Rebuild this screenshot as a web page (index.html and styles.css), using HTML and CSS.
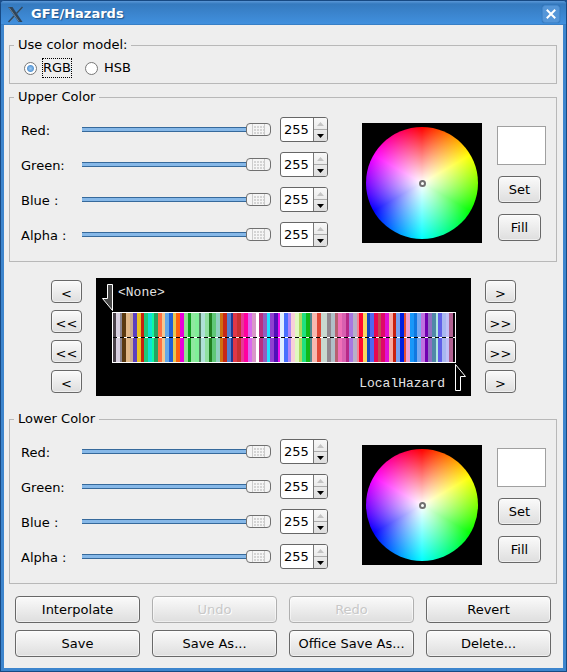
FILE: index.html
```html
<!DOCTYPE html>
<html lang="en">
<head>
<meta charset="utf-8">
<title>GFE/Hazards</title>
<link rel="stylesheet" href="styles.css">
</head>
<body>
<div class="window">
  <header class="titlebar">
    <svg class="app-icon" width="17" height="17" viewBox="0 0 17 17" aria-hidden="true">
      <path d="M14.5 1 L16 1.5 L3 16 L1.5 15.5 Z" fill="#6d93ba"/>
      <path d="M1 1 H5.5 L15.5 16 H11.5 Z" fill="#304458"/>
      <path d="M2 1.5 L12 15.5" fill="none" stroke="#6f8497" stroke-width="1"/>
      <path d="M15.5 1 L9.5 7.5 M7 10 L1.5 16" fill="none" stroke="#2f4860" stroke-width="1.5"/>
    </svg>
    <h1 class="title">GFE/Hazards</h1>
    <button class="close" type="button" aria-label="Close">
      <svg width="10" height="10" viewBox="0 0 10 10"><path d="M1.5 1.5 L8.5 8.5 M8.5 1.5 L1.5 8.5" stroke="#fff" stroke-width="2" stroke-linecap="square"/></svg>
    </button>
  </header>

  <main class="content">
    <fieldset class="group">
      <legend>Use color model:</legend>
      <div class="models">
        <label class="model"><input type="radio" name="model" checked><span class="model-name focused">RGB</span></label>
        <label class="model"><input type="radio" name="model"><span class="model-name">HSB</span></label>
      </div>
    </fieldset>

    <fieldset class="group color-group" data-prefix="upper">
      <legend>Upper Color</legend>
      <div class="color-editor">
        <div class="channels"></div>
        <div class="wheel-box"><div class="wheel"></div><span class="marker"></span></div>
        <div class="side">
          <div class="swatch"></div>
          <button class="btn small" type="button">Set</button>
          <button class="btn small" type="button">Fill</button>
        </div>
      </div>
    </fieldset>

    <section class="range-editor">
      <div class="steps">
        <button class="btn step" type="button">&lt;</button>
        <button class="btn step" type="button">&lt;&lt;</button>
        <button class="btn step" type="button">&lt;&lt;</button>
        <button class="btn step" type="button">&lt;</button>
      </div>
      <svg class="colorbar" viewBox="0 0 375 118" role="img" aria-label="Color table">
        <rect width="375" height="118" fill="#000"/>
        <g id="stripes" shape-rendering="crispEdges"></g>
        <rect x="16.5" y="34.5" width="343" height="50" fill="none" stroke="#fff"/>
        <path d="M17 59.5 H359" stroke="#fff"/>
        <path d="M17 59.5 H359" stroke="#000" stroke-dasharray="4 3"/>
        <path d="M11.5 6.5 H16.5 V32.5 L6.5 20.5 H11.5 Z" fill="#484848" stroke="#fff"/>
        <path d="M359.5 86.5 L369.5 98.5 H364.5 V112.5 H359.5 Z" fill="#000" stroke="#fff"/>
        <text class="mark" x="22" y="18">&lt;None&gt;</text>
        <text class="mark" x="349" y="109" text-anchor="end">LocalHazard</text>
      </svg>
      <div class="steps">
        <button class="btn step" type="button">&gt;</button>
        <button class="btn step" type="button">&gt;&gt;</button>
        <button class="btn step" type="button">&gt;&gt;</button>
        <button class="btn step" type="button">&gt;</button>
      </div>
    </section>

    <fieldset class="group color-group" data-prefix="lower">
      <legend>Lower Color</legend>
      <div class="color-editor">
        <div class="channels"></div>
        <div class="wheel-box"><div class="wheel"></div><span class="marker"></span></div>
        <div class="side">
          <div class="swatch"></div>
          <button class="btn small" type="button">Set</button>
          <button class="btn small" type="button">Fill</button>
        </div>
      </div>
    </fieldset>

    <div class="actions">
      <button class="btn" type="button">Interpolate</button>
      <button class="btn" type="button" disabled>Undo</button>
      <button class="btn" type="button" disabled>Redo</button>
      <button class="btn" type="button">Revert</button>
      <button class="btn" type="button">Save</button>
      <button class="btn" type="button">Save As...</button>
      <button class="btn" type="button">Office Save As...</button>
      <button class="btn" type="button">Delete...</button>
    </div>
  </main>
</div>
<script src="script.js"></script>
</body>
</html>
```
FILE: styles.css
```css
* { box-sizing: border-box; }

body {
  margin: 0;
  background: #1c4f8c;
  color: #000;
  font: 13px/16px "DejaVu Sans", sans-serif;
}

button, input { font: inherit; color: inherit; margin: 0; }

.window {
  display: flex;
  flex-direction: column;
  min-height: 100vh;
  border: 1px solid #174983;
  border-radius: 4px 4px 0 0;
  background: #3d85cd;
  padding: 0 3px 3px;
}

.titlebar {
  display: flex;
  align-items: center;
  height: 24px;
  margin: 0 -3px;
  padding: 2px 6px 0 6px;
  background: linear-gradient(#5b98d8 0, #357abf 3px, #4190de 23px, #2d6eaf 24px);
  border-radius: 3px 3px 0 0;
}

.title {
  flex: 1;
  margin: 0 0 0 7px;
  color: #fff;
  font-size: 13px;
  line-height: 16px;
  text-shadow: 1px 1px 1px #235489;
}

.close {
  display: grid;
  place-items: center;
  width: 18px;
  height: 18px;
  padding: 0;
  border: 1px solid #4488cd;
  border-radius: 3px;
  background: #5596d8;
  box-shadow: 0 0 1px #1f5b9a;
}

.content {
  flex: 1;
  padding: 12px 6px 0 5px;
  background: #eee;
}

.group {
  min-width: 0;
  margin: 0;
  padding: 0 10px 0 11px;
  border: 1px solid #b8b8b8;
}

.group legend {
  margin-left: -7px;
  padding: 0 4px;
}

.models {
  display: flex;
  gap: 13px;
  height: 30px;
  padding: 4px 0 0 3px;
}

.model { display: flex; align-items: center; gap: 5px; height: 22px; }

.model input {
  appearance: none;
  width: 13px;
  height: 13px;
  border: 1px solid #777;
  border-radius: 50%;
  background: #fff;
}

.model input:checked { background: radial-gradient(circle, #9cc9f2 0, #5c9ad6 3px, #fff 4px); }

.model-name { padding: 1px 0; border: 1px dotted transparent; }
.focused { border-color: #000; }

.color-group { margin-top: 5px; }

.color-editor {
  display: flex;
  align-items: flex-start;
  height: 156px;
  padding-top: 18px;
}

.channels { flex: 1; margin-top: -11px; min-width: 0; }

.channel { display: flex; align-items: center; height: 35px; }

.channel label { width: 61px; padding-top: 2px; }

.channel input[type="range"] {
  appearance: none;
  flex: 1;
  min-width: 0;
  height: 15px;
  margin-right: 9px;
  background: transparent;
}

.channel input[type="range"]::-webkit-slider-runnable-track {
  height: 5px;
  background: linear-gradient(#36699b 1px, #86b8e8 1px, #86b8e8 4px, #36699b 4px);
}

.channel input[type="range"]::-webkit-slider-thumb {
  appearance: none;
  width: 25px;
  height: 13px;
  margin-top: -4px;
  border: 1px solid #707070;
  border-radius: 4px;
  background:
    radial-gradient(circle at 1px 1px, #d4d4d4 1px, transparent 1px) 7px 1px / 3px 3px content-box,
    linear-gradient(90deg, #f4f4f4 5px, #ccc 5px, #ccc 6px, #f5f5f5 6px, #f5f5f5 17px, #ccc 17px, #ccc 18px, #f4f4f4 18px);
  background-repeat: repeat, no-repeat;
  padding: 1px 6px;
}

.spin {
  display: flex;
  width: 48px;
  height: 25px;
  border: 1px solid #666;
  border-radius: 3px;
  background: #fff;
  overflow: hidden;
}

.spin input {
  appearance: textfield;
  flex: 1;
  min-width: 0;
  padding: 0 0 0 3px;
  border: 0;
  background: transparent;
}

.spin input::-webkit-inner-spin-button { appearance: none; margin: 0; }

.spin-buttons {
  display: flex;
  flex-direction: column;
  width: 14px;
  border-left: 1px solid #777;
  background: linear-gradient(#f8f8f8, #ddd);
}

.spin-buttons button {
  display: grid;
  flex: 1;
  place-items: center;
  padding: 0;
  border: 0;
  background: transparent;
}

.spin-buttons button + button { border-top: 1px solid #aaa; }

.wheel-box {
  position: relative;
  width: 120px;
  height: 120px;
  margin: 0 15px 0 34px;
  padding: 4px;
  background: #000;
}

.wheel {
  height: 112px;
  border-radius: 50%;
  background:
    radial-gradient(closest-side, #fff, rgba(255, 255, 255, 0)),
    conic-gradient(#f00, #ff0, #0f0, #0ff, #00f, #f0f, #f00);
}

.marker {
  position: absolute;
  inset: 0;
  width: 7px;
  height: 7px;
  margin: auto;
  border: 2px solid #707070;
  border-radius: 50%;
}

.side { display: flex; flex-direction: column; width: 49px; padding-top: 3px; }

.swatch { height: 39px; margin-bottom: 11px; border: 1px solid #a0a0a0; background: #fff; }

.btn {
  height: 27px;
  padding: 0;
  border: 1px solid #686868;
  border-radius: 4px;
  background: linear-gradient(#fafafa, #ececec 50%, #dedede);
  box-shadow: inset 0 0 0 1px rgba(255, 255, 255, 0.5);
  line-height: 16px;
}

.btn:disabled {
  border-color: #b0b0b0;
  color: #c8c8c8;
  text-shadow: 1px 1px #fff;
}

.small { width: 43px; margin: 0 0 11px 1px; }

.range-editor {
  display: flex;
  align-items: flex-start;
  gap: 14px;
  margin: 16px 41px 0 42px;
}

.steps { display: flex; flex-direction: column; gap: 7px; padding-top: 2px; }

.step { width: 31px; height: 23px; padding-top: 4px; }

.colorbar { display: block; flex: 1; min-width: 0; }

.mark { fill: #e4e4e4; font: 13px "Liberation Mono", monospace; }

.range-editor + .color-group { margin-top: 15px; }

.actions {
  display: grid;
  grid-template-columns: repeat(4, 1fr);
  gap: 7px 12px;
  padding: 12px 6px 11px;
}
```
FILE: script.js
```js
// Channel rows shared by the upper and lower editors.
const channels = ["Red:", "Green:", "Blue :", "Alpha :"];

document.querySelectorAll(".color-group").forEach((group) => {
  const prefix = group.dataset.prefix;
  group.querySelector(".channels").innerHTML = channels.map((name, i) => {
    const id = prefix + "-" + i;
    return `<div class="channel">
      <label for="${id}">${name}</label>
      <input id="${id}" type="range" min="0" max="255" value="255">
      <div class="spin">
        <input type="number" min="0" max="255" value="255" aria-label="${name} value">
        <div class="spin-buttons">
          <button type="button" disabled aria-label="Increase"><svg width="7" height="4" viewBox="0 0 7 4"><path d="M0 4 L3.5 0 L7 4Z" fill="#c4c4c4"/></svg></button>
          <button type="button" aria-label="Decrease"><svg width="7" height="4" viewBox="0 0 7 4"><path d="M0 0 L3.5 4 L7 0Z" fill="#000"/></svg></button>
        </div>
      </div>
    </div>`;
  }).join("");
});

// Color table entries: color and width of each stripe.
const table = `484048 3,d8d0e0 4,888490 2,5a3a10 4,e0b888 4,c8a890 3,5a3fc0 4,e8c020 4,c82010 3,20c878 4,
10e0d8 4,10f8a0 2,28a060 4,ff7040 4,f0c890 3,60a8e8 4,2060d8 4,e8c850 3,ff6010 4,e800d8 4,90e090 4,10a020 3,
90e8a0 4,80f098 4,508060 2,b0e0d8 4,90e0a0 4,208020 3,60c878 4,90d0c0 4,d07010 3,c82818 4,5080d0 4,203890 2,
e03848 4,c83030 4,e83898 3,ff00a0 4,d868f0 4,d898c8 4,ffffff 3,b83080 4,9060c0 4,20e0ff 3,9040d0 4,5010b8 4,
f010f0 2,e0f0ff 4,4870ff 4,b088f8 3,f8d0d8 4,e0f8c0 4,b0d860 3,20e080 4,10b818 4,508890 2,f8b8b0 5,e04838 4,
c8d8d0 6,908890 4,b0c0c8 4,b86070 3,f070b8 4,d860b0 4,b82888 3,a878e0 4,b8b0c8 4,f08898 2,ff0830 4,f8d860 4,
1048c0 3,5068f0 4,e80850 4,c05050 3,e00868 4,e010d8 4,f8a8a0 4,c82010 3,78a0f0 4,0020e0 4,e85030 2,f0a0d0 4,
1898f8 4,1078e0 3,78a8f0 4,c070e0 4,7000b0 3,9070c0 4,5088a8 4,b0e8e0 2,6060e8 4,a8b8f0 4,c0c0f8 3,b06090 4,
080008 2`;

let x = 17;
document.getElementById("stripes").innerHTML = table.split(",").map((entry) => {
  const [color, width] = entry.trim().split(" ");
  const rect = `<rect x="${x}" y="35" width="${width}" height="49" fill="#${color}"/>`;
  x += Number(width);
  return rect;
}).join("");
```
